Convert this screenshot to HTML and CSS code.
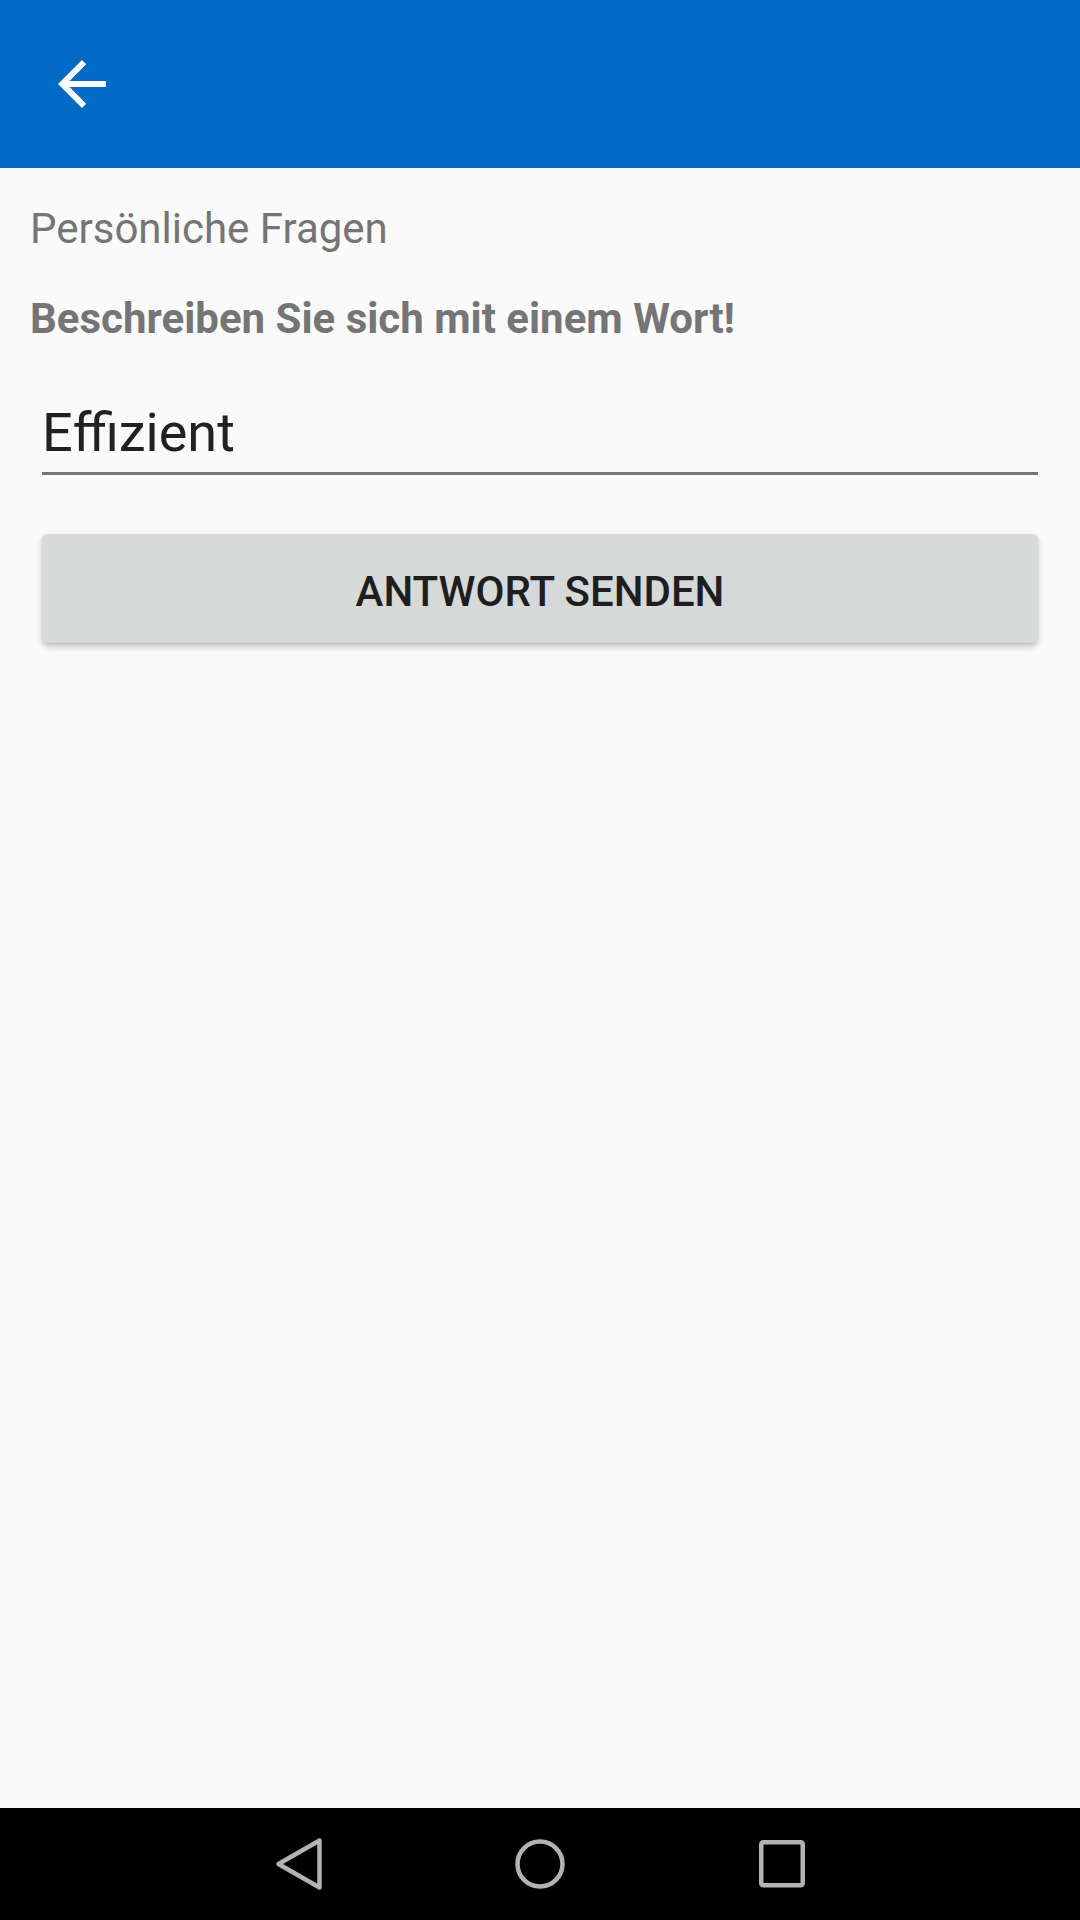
FILE: index.html
```html
<!DOCTYPE html>
<html lang="de">
<head>
<meta charset="utf-8">
<title>Persönliche Fragen</title>
<link rel="stylesheet" href="styles.css">
</head>
<body>
<div class="screen">
  <header class="appbar">
    <button class="back" aria-label="Zurück">
      <svg viewBox="0 0 24 24" width="72" height="72"><path fill="#ffffff" d="M20 11H7.83l5.59-5.59L12 4l-8 8 8 8 1.41-1.41L7.83 13H20v-2z"/></svg>
    </button>
  </header>
  <main class="content">
    <div class="category">Persönliche Fragen</div>
    <div class="question">Beschreiben Sie sich mit einem Wort!</div>
    <div class="form">
      <div class="field">
        <div class="field-text">Effizient</div>
      </div>
      <button class="send">ANTWORT SENDEN</button>
    </div>
  </main>
  <nav class="navbar">
    <svg class="nav-icon" viewBox="0 0 60 60" width="60" height="60"><path d="M51.5 6.5 L10.5 30 L51.5 53.5 Z" fill="none" stroke="#b3b3b3" stroke-width="4.5" stroke-linejoin="round"/></svg>
    <svg class="nav-icon" viewBox="0 0 60 60" width="60" height="60"><circle cx="30" cy="30" r="22.5" fill="none" stroke="#b3b3b3" stroke-width="4.5"/></svg>
    <svg class="nav-icon" viewBox="0 0 60 60" width="60" height="60"><rect x="9.25" y="8.25" width="41.5" height="43" rx="2" fill="none" stroke="#b3b3b3" stroke-width="4.5"/></svg>
  </nav>
</div>
</body>
</html>
```

FILE: styles.css
```css
* { box-sizing: border-box; }
html, body { margin: 0; padding: 0; }
body {
  width: 1080px;
  height: 1920px;
  background: #fafafa;
  font-family: Roboto, "Noto Sans", sans-serif;
  overflow: hidden;
}
.screen {
  width: 1080px;
  height: 1920px;
  display: flex;
  flex-direction: column;
}
.appbar {
  height: 168px;
  background: #006ac6;
  display: flex;
  align-items: center;
  padding-left: 46px;
  flex-shrink: 0;
}
.back {
  width: 72px;
  height: 72px;
  padding: 0;
  border: 0;
  background: transparent;
  display: block;
}
.back svg { display: block; }
.content {
  flex: 1;
  padding: 33px 42px 0 30px;
}
.category {
  font-size: 42px;
  line-height: 56px;
  color: #757575;
}
.question {
  margin-top: 34px;
  font-size: 42px;
  line-height: 56px;
  font-weight: 700;
  color: #757575;
}
.form {
  margin-left: 12px;
  display: flex;
  flex-direction: column;
}
.field {
  margin-top: 54px;
  border-bottom: 3px solid #767676;
  padding-bottom: 7px;
}
.field-text {
  font-size: 54px;
  line-height: 64px;
  color: #212121;
}
.send {
  display: flex;
  align-items: center;
  justify-content: center;
  height: 109px;
  margin-top: 59px;
  padding: 6px 0 0 0;
  border: 0;
  border-radius: 6px;
  background: #d7d8d8;
  box-shadow: 0 4px 6px rgba(0,0,0,0.18), 0 1px 3px rgba(0,0,0,0.12);
  font-family: Roboto, "Noto Sans", sans-serif;
  font-size: 42px;
  font-weight: 500;
  letter-spacing: 0;
  color: #1e1e1e;
}
.navbar {
  height: 112px;
  background: #000000;
  flex-shrink: 0;
  display: flex;
  align-items: center;
  justify-content: center;
  gap: 182px;
}
.nav-icon { display: block; }
```
